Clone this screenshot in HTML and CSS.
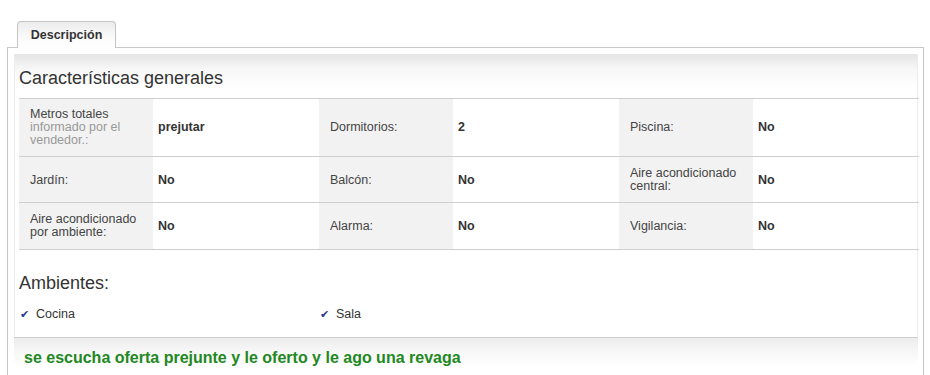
FILE: index.html
```html
<!DOCTYPE html>
<html lang="es">
<head>
    <meta charset="UTF-8">
    <title>Descripción</title>
    <link rel="stylesheet" href="styles.css">
</head>
<body>

<div class="tabs">
    <div class="tab">Descripción</div>
</div>

<div class="panel">
    <div class="section">
        <h2>Características generales</h2>
        <table class="features">
            <tr>
                <td class="label">Metros totales<span class="note">informado por el vendedor.:</span></td>
                <td class="value">prejutar</td>
                <td class="label">Dormitorios:</td>
                <td class="value">2</td>
                <td class="label">Piscina:</td>
                <td class="value">No</td>
            </tr>
            <tr>
                <td class="label">Jardín:</td>
                <td class="value">No</td>
                <td class="label">Balcón:</td>
                <td class="value">No</td>
                <td class="label">Aire acondicionado central:</td>
                <td class="value">No</td>
            </tr>
            <tr>
                <td class="label">Aire acondicionado por ambiente:</td>
                <td class="value">No</td>
                <td class="label">Alarma:</td>
                <td class="value">No</td>
                <td class="label">Vigilancia:</td>
                <td class="value">No</td>
            </tr>
        </table>

        <h3>Ambientes:</h3>
        <ul class="rooms">
            <li>Cocina</li>
            <li>Sala</li>
        </ul>
    </div>

    <div class="comment">
        <p>se escucha oferta prejunte y le oferto y le ago una revaga</p>
    </div>
</div>

</body>
</html>
```

FILE: styles.css
```css
body {
    font-family: "Liberation Sans", Arial, sans-serif;
    background-color: #fff;
    color: #333;
    margin: 0;
    padding: 0;
}

.tabs {
    padding: 21px 0 0 17px;
    display: flex;
}

.tab {
    width: 97px;
    height: 26px;
    line-height: 26px;
    border: 1px solid #c4c4c4;
    border-bottom: none;
    border-radius: 4px 4px 0 0;
    background: linear-gradient(#ececec, #fafafa 60%, #fff);
    text-align: center;
    font-size: 12.5px;
    font-weight: bold;
    color: #333;
    margin-bottom: -1px;
    position: relative;
}

.panel {
    margin-left: 7px;
    width: 904px;
    border: 1px solid #c8c8c8;
    padding: 6px 5px 20px 6px;
}

.section {
    width: 904px;
    padding: 0 0 0 5px;
    box-sizing: border-box;
    background: linear-gradient(#e4e4e4, #f6f6f6 14px, #fff 34px);
    box-shadow: inset 1px 0 0 #ececec, inset -1px 0 0 #ececec;
}

h2 {
    margin: 0;
    padding: 14px 0 0 0;
    height: 30px;
    line-height: 20px;
    font-size: 18px;
    font-weight: normal;
    color: #333;
}

.features {
    width: 899px;
    table-layout: fixed;
    border-collapse: collapse;
    font-size: 12.5px;
}

.features tr {
    border-top: 1px solid #cfcfcf;
    border-bottom: 1px solid #cfcfcf;
}

.features td {
    box-sizing: border-box;
    padding: 10px 8px 9px 11px;
    line-height: 13px;
    vertical-align: middle;
}

.features .label {
    width: 134px;
    background-color: #f2f2f2;
    color: #444;
}

.features .value {
    width: 166px;
    font-weight: bold;
    color: #333;
    padding-left: 5px;
}

.features tr:first-child td {
    padding-top: 9px;
    padding-bottom: 9px;
}

.features tr:last-child td {
    padding-bottom: 10px;
}

.note {
    display: block;
    color: #999;
}

h3 {
    margin: 0;
    padding: 23px 0 0 0;
    line-height: 20px;
    font-size: 18px;
    font-weight: normal;
    color: #333;
}

.rooms {
    list-style: none;
    margin: 0;
    padding: 14px 0 16px 0;
    display: grid;
    grid-template-columns: 300px 300px;
    font-size: 12.5px;
    color: #333;
}

.rooms li::before {
    content: "\2714";
    color: #2b3990;
    font-size: 11px;
    margin-right: 7px;
    margin-left: 1px;
}

.comment {
    width: 904px;
    border-top: 1px solid #cfcfcf;
    background: linear-gradient(#ececec, #f6f6f6 12px, #fff 28px);
}

.comment p {
    margin: 0;
    padding: 11px 0 0 10px;
    font-size: 16px;
    font-weight: bold;
    color: #228822;
}
```
